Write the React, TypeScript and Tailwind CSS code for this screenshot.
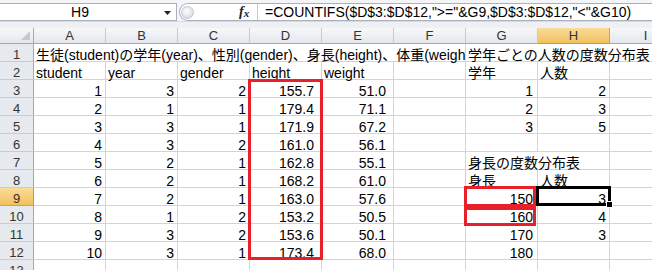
import React from "react";

type C = { t?: string; r?: boolean; pad?: string; span?: string };

const heights = ["155.7", "179.4", "171.9", "161.0", "162.8", "168.2", "163.0", "153.2", "153.6", "173.4"];
const weights = ["51.0", "71.1", "67.2", "56.1", "55.1", "61.0", "57.6", "50.5", "50.1", "68.0"];
const years = ["3", "1", "3", "3", "2", "2", "2", "1", "3", "3"];
const genders = ["2", "1", "1", "2", "1", "1", "1", "2", "2", "1"];

const E: C = {};
const num = (t: string, pad: string): C => ({ t, r: true, pad });
const txt = (t: string, span?: string): C => ({ t, span });

function buildRows(): C[][] {
  const rows: C[][] = [];
  rows.push([
    txt("生徒(student)の学年(year)、性別(gender)、身長(height)、体重(weight)", "col-span-6"),
    txt("学年ごとの人数の度数分布表", "col-span-4"),
  ]);
  rows.push([txt("student"), txt("year"), txt("gender"), txt("height"), txt("weight"), E, txt("学年"), txt("人数"), E, E]);
  const gCol: Record<number, C[]> = {
    3: [num("1", "pr-[4px]"), num("2", "pr-[3px]")],
    4: [num("2", "pr-[4px]"), num("3", "pr-[3px]")],
    5: [num("3", "pr-[4px]"), num("5", "pr-[3px]")],
    6: [E, E],
    8: [txt("身長"), txt("人数")],
    9: [num("150", "pr-[4px]"), num("3", "pr-[3px]")],
    10: [num("160", "pr-[4px]"), num("4", "pr-[3px]")],
    11: [num("170", "pr-[4px]"), num("3", "pr-[3px]")],
    12: [num("180", "pr-[4px]"), E],
  };
  for (let i = 0; i < 10; i++) {
    const rn = i + 3;
    const base: C[] = [
      num(String(i + 1), "pr-[3px]"),
      num(years[i], "pr-[3px]"),
      num(genders[i], "pr-[3px]"),
      num(heights[i], "pr-[7px]"),
      num(weights[i], "pr-[7px]"),
      E,
    ];
    if (rn === 7) {
      rows.push([...base, txt("身長の度数分布表", "col-span-2"), E, E]);
    } else {
      rows.push([...base, ...gCol[rn], E, E]);
    }
  }
  rows.push([E, E, E, E, E, E, E, E, E, E]);
  return rows;
}

const rows = buildRows();
const colLetters = ["A", "B", "C", "D", "E", "F", "G", "H", "I", "J"];

function Cell({ c }: { c: C }) {
  return (
    <div
      className={`h-[18px] border-r border-b border-[#d4d4d4] flex items-end whitespace-nowrap overflow-x-clip ${
        c.span ?? ""
      } ${c.r ? `justify-end ${c.pad}` : "pl-[2px]"}`}
    >
      {c.t ? <span className="leading-[12px] text-[14px] text-black">{c.t}</span> : null}
    </div>
  );
}

export default function App() {
  return (
    <div className="w-[652px] h-[270px] overflow-hidden relative bg-white font-['Liberation_Sans','Noto_Sans_CJK_JP',sans-serif]">
      {/* formula bar */}
      <div className="h-[21px] flex items-start bg-[#f3f5f8]">
        <div className="mt-[3px] h-[18px] w-[177px] shrink-0 bg-white border-t border-b border-r border-[#a8b1bc] flex items-center relative">
          <span className="w-[160px] text-center text-[14px] leading-[14px] text-black">H9</span>
          <svg className="absolute left-[164px] top-[7px]" width="8" height="5" viewBox="0 0 8 5">
            <path d="M0 0 H7 L3.5 4 Z" fill="#222" />
          </svg>
        </div>
        <div className="ml-[2px] mt-[3px] h-[18px] flex-1 flex items-center bg-white border-t border-b border-l border-[#a8b1bc] rounded-l-[9px]">
          <div className="ml-[1px] w-[13px] h-[13px] rounded-full border border-[#c3c9d1] bg-[radial-gradient(circle_at_45%_40%,#ffffff_0%,#e3e6ea_55%,#c9ced5_100%)]" />
          <div className="ml-[45px] w-[14px] flex items-end font-['Liberation_Serif',serif] italic font-bold text-[#222]">
            <span className="text-[14px] leading-[14px]">f</span>
            <span className="text-[11px] leading-[11px]">x</span>
          </div>
          <div className="ml-[4px] h-full border-l border-[#c3c9d1]" />
          <span className="ml-[7px] text-[14px] leading-[14px] text-black whitespace-nowrap">
            =COUNTIFS($D$3:$D$12,"&gt;="&amp;G9,$D$3:$D$12,"&lt;"&amp;G10)
          </span>
        </div>
      </div>
      {/* splitter band */}
      <div className="h-[7px] bg-[#eef0f3] border-t border-[#d5dae0]" />

      {/* column header row */}
      <div className="grid grid-cols-[34px_repeat(10,72px)] h-[16px]">
        <div className="h-[16px] border-r border-b border-[#9eabbb] bg-[linear-gradient(#f7f8fa,#e3e7ec)] relative">
          <svg className="absolute right-[3px] bottom-[3px]" width="9" height="9" viewBox="0 0 9 9">
            <path d="M9 0 V9 H0 Z" fill="#c3c9d1" />
          </svg>
        </div>
        {colLetters.map((l) =>
          l === "H" ? (
            <div
              key={l}
              className="h-[16px] border-r border-b border-r-[#c9a555] border-b-[#c29b48] bg-[linear-gradient(#f9dc97,#f1c15f)] flex items-center justify-center text-[13px] leading-[13px] text-[#333]"
            >
              {l}
            </div>
          ) : (
            <div
              key={l}
              className="h-[16px] border-r border-b border-r-[#c6ccd4] border-b-[#9eabbb] bg-[linear-gradient(#f7f8fa,#e3e7ec)] flex items-center justify-center text-[13px] leading-[13px] text-[#333]"
            >
              {l}
            </div>
          )
        )}
      </div>

      {/* sheet rows */}
      <div className="grid grid-cols-[34px_repeat(10,72px)] auto-rows-[18px]">
        {rows.map((row, ri) => (
          <React.Fragment key={ri}>
            {ri === 8 ? (
              <div className="h-[18px] border-r border-b border-r-[#c29b48] border-b-[#c9a555] bg-[linear-gradient(#f9dc97,#f1c15f)] flex items-end justify-center text-[13px] text-[#333]">
                <span className="leading-[12px]">{ri + 1}</span>
              </div>
            ) : (
              <div className="h-[18px] border-r border-b border-r-[#9eabbb] border-b-[#c6ccd4] bg-[#e6e9ee] flex items-end justify-center text-[13px] text-[#333]">
                <span className="leading-[12px]">{ri + 1}</span>
              </div>
            )}
            {row.map((c, ci) => (
              <Cell key={ci} c={c} />
            ))}
          </React.Fragment>
        ))}
      </div>

      {/* annotations */}
      <div className="absolute left-[248px] top-[79px] w-[75px] h-[181px] border-[3px] border-[#e8202a]" />
      <div className="absolute left-[464px] top-[186px] w-[72px] h-[21px] border-[3px] border-[#e8202a]" />
      <div className="absolute left-[464px] top-[207px] w-[72px] h-[19px] border-[3px] border-[#e8202a]" />
      {/* selection */}
      <div className="absolute left-[536px] top-[186px] w-[75px] h-[20px] border-[3px] border-black" />
      <div className="absolute left-[606px] top-[201px] w-[7px] h-[7px] bg-black border border-white" />
    </div>
  );
}
